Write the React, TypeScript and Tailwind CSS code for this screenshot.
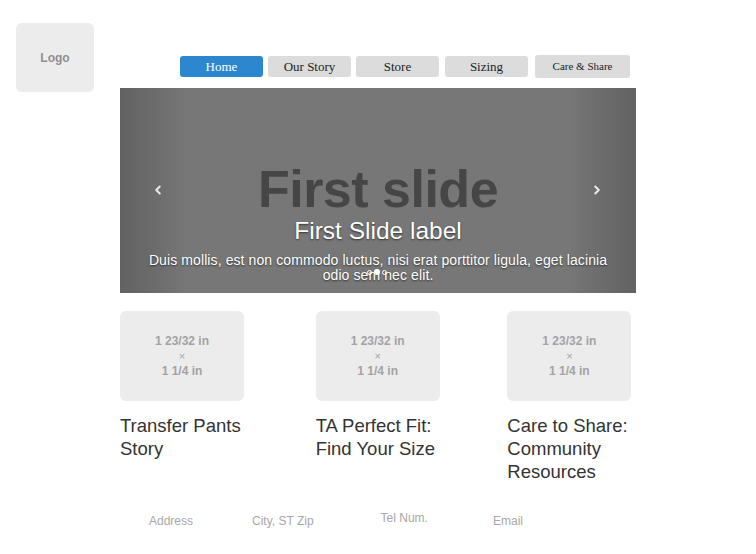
import { ChevronLeft, ChevronRight } from "lucide-react";

const NAV = [
  { label: "Home", w: "w-[83px]", active: true, text: "text-[13px]" },
  { label: "Our Story", w: "w-[83px]", active: false, text: "text-[13px]" },
  { label: "Store", w: "w-[83px]", active: false, text: "text-[13px]" },
  { label: "Sizing", w: "w-[83px]", active: false, text: "text-[13px]" },
  { label: "Care & Share", w: "w-[95px]", active: false, text: "text-[11px]" },
];

const CARDS = [
  "Transfer Pants Story",
  "TA Perfect Fit: Find Your Size",
  "Care to Share: Community Resources",
];

// placeholder image box with its print size
function Placeholder() {
  return (
    <div className="w-[124px] h-[90px] rounded-md bg-[#ececec] flex flex-col items-center justify-center text-[12px] font-bold leading-[15px] text-[#a3a3a3]">
      <span>1 23/32 in</span>
      <span className="font-normal text-[11px]">×</span>
      <span>1 1/4 in</span>
    </div>
  );
}

export default function App() {
  return (
    <div className="w-[756px] h-[554px] bg-white font-['Liberation_Sans',Arial,sans-serif] flex">
      <div className="pl-4 pt-[23px]">
        <div className="w-[78px] h-[69px] rounded-md bg-[#ececec] flex items-center justify-center text-[12px] font-bold text-[#8f8f8f]">
          Logo
        </div>
      </div>

      <div className="ml-[26px] w-[516px] flex flex-col">
        <nav className="mt-[55px] ml-[60px] flex items-center font-['Liberation_Serif','Times_New_Roman',serif]">
          {NAV.map((n, i) => (
            <div
              key={n.label}
              className={`${n.w} h-[21px] rounded-[3px] flex items-center justify-center ${n.text} ${
                i === 0 ? "" : i === 4 ? "ml-[7px] h-[23px]" : i === 3 ? "ml-[6px]" : "ml-[5px]"
              } ${n.active ? "bg-[#2d87cf] text-white" : "bg-[#dcdcdc] text-[#222]"}`}
            >
              {n.label}
            </div>
          ))}
        </nav>

        <section className="mt-[10px] h-[205px] relative bg-[linear-gradient(to_right,#626262_0%,#6e6e6e_8%,#777777_13%,#777777_87%,#6e6e6e_92%,#626262_100%)] flex flex-col items-center">
          <ChevronLeft
            size={14}
            strokeWidth={3.5}
            className="absolute left-[31px] top-[95px] text-[#e8e8e8]"
          />
          <ChevronRight
            size={14}
            strokeWidth={3.5}
            className="absolute right-[32px] top-[95px] text-[#e8e8e8]"
          />
          <div className="mt-[75px] text-[52px] font-bold leading-[52px] text-[#464646] tracking-[-0.5px]">
            First slide
          </div>
          <div className="mt-[2px] text-[24.5px] leading-[28px] text-white [text-shadow:0_1px_2px_rgba(0,0,0,0.6)]">
            First Slide label
          </div>
          <p className="mt-[8px] w-[466px] text-center text-[14px] tracking-[0.1px] leading-[15px] text-white [text-shadow:0_1px_2px_rgba(0,0,0,0.6)]">
            Duis mollis, est non commodo luctus, nisi erat porttitor ligula, eget lacinia odio sem nec elit.
          </p>
          <div className="absolute left-[247px] top-[182px] flex gap-[2px]">
            <span className="w-[5px] h-[5px] rounded-full border border-white" />
            <span className="w-[6px] h-[6px] -mt-px rounded-full bg-white" />
            <span className="w-[5px] h-[5px] rounded-full border border-white" />
          </div>
        </section>

        <div className="mt-[18px] flex">
          {CARDS.map((title, i) => (
            <div key={title} className={`w-[130px] ${i === 1 ? "ml-[67px]" : i === 2 ? "ml-[63px]" : ""}`}>
              <Placeholder />
              <h3 className="mt-[13px] text-[18.5px] leading-[23px] text-[#333]">
                {title}
              </h3>
            </div>
          ))}
        </div>

        <footer className="mt-auto mb-[24px] flex text-[12px] text-[#a8a8a8]">
          <span className="ml-[29px]">Address</span>
          <span className="ml-[59px]">City, ST Zip</span>
          <span className="ml-[67px] -mt-[3px]">Tel Num.</span>
          <span className="ml-[65px]">Email</span>
        </footer>
      </div>
    </div>
  );
}
